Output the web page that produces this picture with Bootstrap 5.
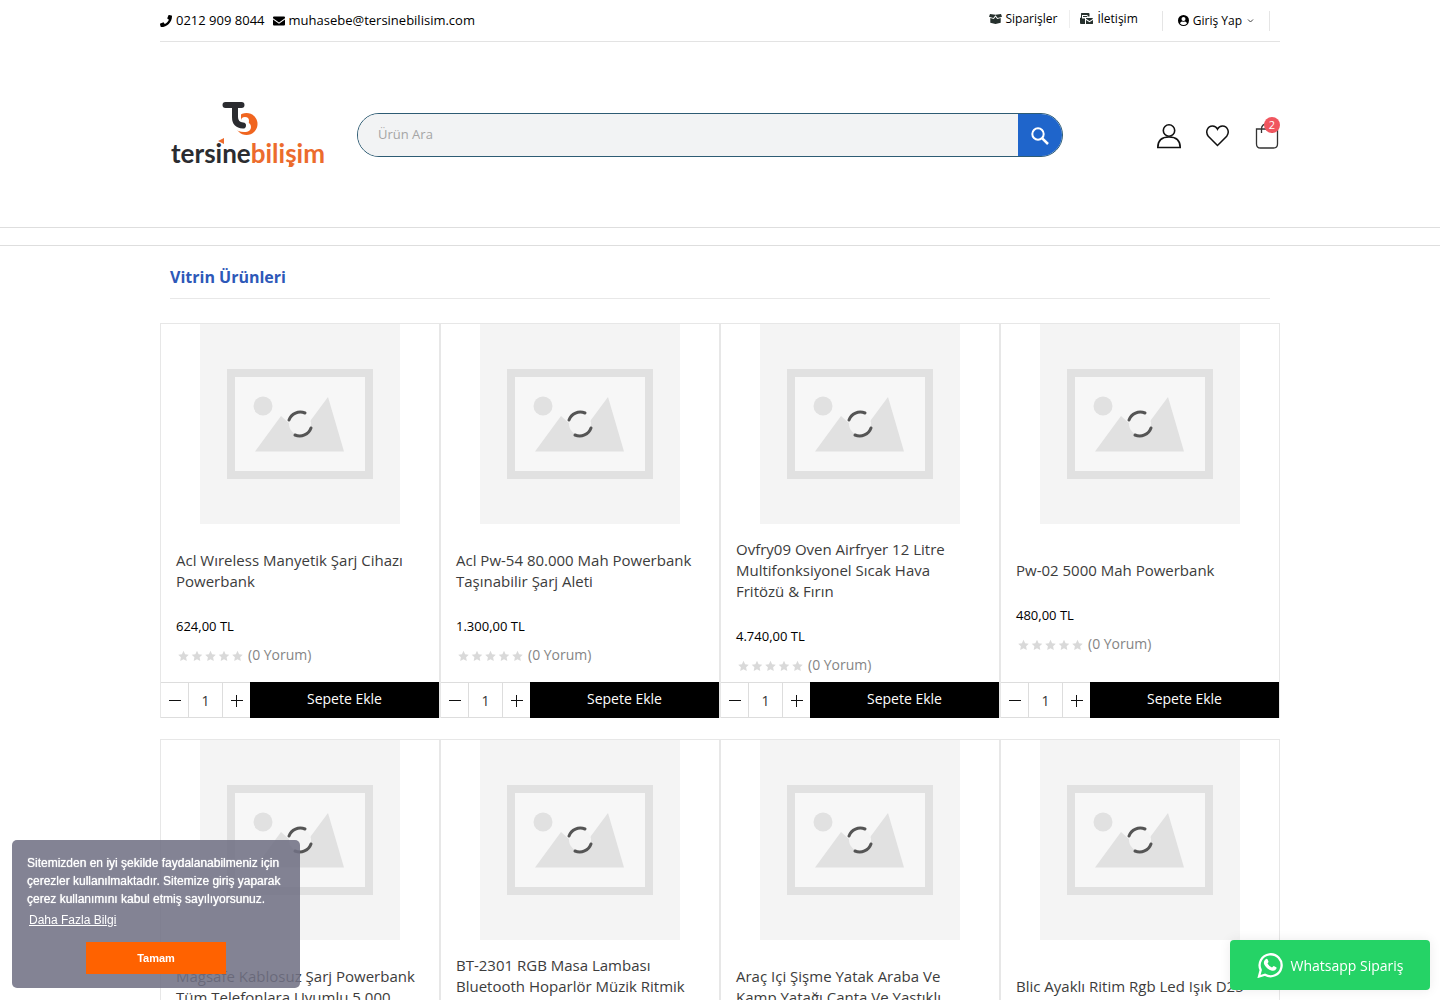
<!DOCTYPE html>
<html lang="tr">
<head>
<meta charset="utf-8">
<meta name="viewport" content="width=device-width, initial-scale=1">
<title>Tersine Bilişim</title>
<link href="https://cdn.jsdelivr.net/npm/bootstrap@5.3.0/dist/css/bootstrap.min.css" rel="stylesheet">
<style>
body{font-family:"Open Sans","Noto Sans",sans-serif;color:#000;background:#fff;font-size:14px}
a{color:inherit;text-decoration:none}
.shop-wrap{max-width:1120px;margin:0 auto}
.top-strip{height:42px;border-bottom:1px solid #e3e3e3;font-size:13px}
.top-strip .quick{font-size:12px;margin-right:10px}
.top-strip .quick-link{margin-bottom:4px}
.quick-first{padding-right:12px}
.split{border-left:1px solid #eee;padding-left:10px}
.login-box{border-left:1px solid #e5e5e5;border-right:1px solid #e5e5e5;padding:0 15px;height:20px}
.site-head{height:185px}
.brand-box{width:176px;padding:0 10px;margin-right:21px}
.brand-word{font:700 26px/32px Lato,sans-serif;color:#2b2c30}
.brand-word em{font-style:normal;color:#ec6b2d}
.brand-marks{left:0;bottom:0}
.search-box{width:706px;height:44px;border:1px solid #2e5c74;border-radius:22px;overflow:hidden;background:#f2f2f2}
.search-box input{background:#f2f3f4;border:0;padding:0 20px;font-size:13px;outline:0}
.search-box input::placeholder{color:#a5a5a5}
.search-box button{width:44px;border:0;background:#1f65cb}
.head-icons{padding-top:2px}
.count-dot{top:-6px;right:0;width:16px;height:16px;border-radius:50%;background:#f0565f;color:#fff;font-size:11px;line-height:16px}
.menu-strip{height:19px;border-top:1px solid #dedede;border-bottom:1px solid #dedede}
.sec-title{margin:0 10px 24px;padding:20px 0 10px;font-size:16px;line-height:22px;font-weight:700;color:#2d58b8;border-bottom:1px solid #e8e8e8}
.product{border:1px solid #e7e7e7;border-bottom:0;margin-bottom:21px}
.product .info{height:158px;padding:8px 15px 0}
.product h3{font-size:15px;line-height:21px;font-weight:400;color:#3c3c3c;margin:0 0 24px;padding-right:5px}
.price{font-size:13px;line-height:20px;font-weight:500;margin-bottom:9px}
.votes{font-size:14px;line-height:20px;color:#858585}
.buy{height:36px}
.buy button,.buy input{border:0;background:#fff;padding:0}
.qty-row{width:89px;border:1px solid #ddd;border-left:0;border-right:0}
.qty-row button{width:27px;line-height:1}
.qty-row input{width:35px;font-size:14px;text-align:center;border-left:1px solid #ddd;border-right:1px solid #ddd;color:#333}
.buy .add{background:#000;color:#fff;font-size:14px;padding-bottom:3px}
.cookie{left:12px;bottom:12px;width:288px;height:148px;padding:14px 15px;border-radius:5px;background:rgba(113,112,132,.87);color:#fff;font:12px/18px "Liberation Sans",Arial,sans-serif;z-index:5}
.cookie p{text-shadow:0 0 1px #fff}
.cookie a{text-decoration:underline;padding:0 2px;margin-top:3px}
.cookie button{width:140px;height:32px;border:0;background:#ff6200;color:#fff;font-weight:700;font-size:11px;margin-top:13px}
.wa{right:10px;bottom:10px;width:200px;height:50px;border-radius:4px;background:#25d366;color:#fff;font-size:14px;box-shadow:0 0 12px rgba(0,0,0,.08);z-index:5}
</style>
<script src="https://cdn.jsdelivr.net/npm/bootstrap@5.3.0/dist/js/bootstrap.bundle.min.js"></script>
</head>
<body>
<svg class="d-none" aria-hidden="true">
  <symbol id="ph" viewBox="0 0 200 200">
    <path fill="#f4f4f4" d="M0 0h200v200H0z"/>
    <path fill="#f7f7f7" stroke="#e1e1e1" stroke-width="8" d="M31 49h138v102H31z"/>
    <circle cx="63" cy="82" r="9.500" fill="#e1e1e1"/>
    <path fill="#e1e1e1" d="M55 127.500 81 92l18 16 9-8 20-27 16 54.500z"/>
    <circle cx="100" cy="100" r="11" fill="#f4f4f4"/>
    <path fill="none" stroke="#555" stroke-width="3" stroke-linecap="round" d="M89 96a12 12 0 0 1 16-7M111 104a12 12 0 0 1-16 7"/>
  </symbol>
  <symbol id="stars" viewBox="0 0 68 14">
    <g fill="#d9d9d9"><path id="st" d="m7.500 2.800 1.600 3.400 3.700.5-2.700 2.600.7 3.700-3.300-1.800L4.200 13l.7-3.700L2.200 6.700l3.700-.5z"/><use href="#st" x="13.500"/><use href="#st" x="27"/><use href="#st" x="40.500"/><use href="#st" x="54"/></g>
  </symbol>
  <symbol id="minus" viewBox="0 0 12 12"><path d="M0 5.500h12" stroke="#111"/></symbol>
  <symbol id="plus" viewBox="0 0 12 12"><path d="M0 5.500h12M5.500 0v12" stroke="#111"/></symbol>
</svg>

<header>
  <div class="shop-wrap">
    <div class="top-strip d-flex align-items-center justify-content-between">
      <div class="d-flex align-items-center gap-2">
        <a href="#" class="d-flex align-items-center gap-1"><svg width="12" height="12" viewBox="0 0 512 512"><path d="M493 25 389 1c-11-3-23 3-27 14l-48 112c-4 10-1 22 7 29l61 49c-36 77-99 141-178 178l-49-61c-7-8-19-11-29-7L14 363c-11 5-17 16-14 27l24 104c3 11 12 18 24 18 256 0 464-207 464-464 0-11-8-21-19-23z"/></svg>0212 909 8044</a>
        <a href="#" class="d-flex align-items-center gap-1"><svg width="12" height="12" viewBox="0 0 12 12"><path d="M0 2.500Q0 1.500 1 1.500h10q1 0 1 1v.8L6 7.600 0 3.300zM0 4.500l6 4.300 6-4.300v5q0 1-1 1H1q-1 0-1-1z"/></svg>muhasebe@tersinebilisim.com</a>
      </div>
      <div class="quick d-flex align-items-center">
        <a href="#" class="quick-link quick-first d-flex align-items-center gap-1"><svg width="13" height="12" viewBox="0 0 13 12"><path fill="#26302d" d="m1 1 5.500.8L12 1l1 2.800-4.300 1.300L6.500 2.300 4.300 5.100 0 3.800zM1.300 5l3.500 1 1.700-2.300L8.200 6l3.500-1v4.700L6.500 11 1.300 9.700z"/></svg>Siparişler</a>
        <a href="#" class="quick-link split d-flex align-items-center gap-1 pe-4"><svg width="13" height="12" viewBox="0 0 13 12"><path fill="#26302d" d="M1.500 0h7Q9.500 0 9.500 1v2.500h-2V2H2v3.500h3V11H1q-1 0-1-1V5l1-.5V1Q1 0 1.500 0zM6 5h6q1 0 1 .8L9.500 8 6 5.800zM6 7l3.500 2.200L13 7v3.500q0 .5-1 .5H6z"/><path fill="#26302d" d="M3 3h4v1H3zM1 7h4v1H1z"/></svg>İletişim</a>
        <a href="#" class="login-box d-flex align-items-center gap-1"><svg width="11" height="11" viewBox="0 0 11 11"><circle cx="5.500" cy="5.500" r="5.500"/><circle cx="5.500" cy="4" r="2" fill="#fff"/><path fill="#fff" d="M2 8.500q.5-2 2.200-2 1.300.6 2.600 0 1.700 0 2.200 2-3.500 3-7 0z"/></svg>Giriş Yap<svg width="8" height="6" viewBox="0 0 8 6" fill="none" stroke="#444"><path d="m2 1.500 2.500 2.500L7 1.500"/></svg></a>
      </div>
    </div>
    <div class="site-head d-flex align-items-center">
      <a href="#" class="brand-box position-relative d-flex flex-column align-items-center">
        <svg class="me-3" width="36" height="36" viewBox="0 0 36 36"><circle cx="24.500" cy="23" r="11" fill="#f0651f"/><path d="M14 8v9q0 9 8 9h2" fill="none" stroke="#fff" stroke-width="10" stroke-linecap="round"/><circle cx="23" cy="20" r="4" fill="#fff"/><path d="M3.500 4h16M13 5v11q0 8 8 8.500" fill="none" stroke="#2b2c30" stroke-width="6" stroke-linecap="round"/></svg>
        <span class="brand-word">tersine<em>bilişim</em></span>
        <svg class="brand-marks position-absolute" width="176" height="36" viewBox="0 0 176 36" aria-hidden="true"><path fill="#ec6b2d" d="m58 8 6-3v6zM129 28l6 3-6 3z"/></svg>
      </a>
      <form class="search-box d-flex">
        <input type="text" class="flex-grow-1" placeholder="Ürün Ara" aria-label="Ürün Ara">
        <button type="button" aria-label="Ara"><svg width="18" height="18" viewBox="0 0 18 18" fill="none" stroke="#fff" stroke-width="2"><circle cx="7" cy="7" r="5.700"/><path d="m11.300 11.300 5.700 5.700" stroke-width="2.500"/></svg></button>
      </form>
      <div class="head-icons d-flex align-items-center gap-4 ms-auto">
        <a href="#" aria-label="Hesabım"><svg width="25" height="26" viewBox="0 0 25 26" fill="none" stroke="#111" stroke-width="1.600"><circle cx="12" cy="7.500" r="5.700"/><path d="M.8 24.500q0-10.500 11.200-10.500t11.200 10.500z"/></svg></a>
        <a href="#" aria-label="Favoriler"><svg width="25" height="24" viewBox="0 0 25 24" fill="none" stroke="#111" stroke-width="1.500"><path d="M11.500 21.500 2.300 12.200C-1 8 1.500 2 6.500 2q3.500 0 5 3.200Q13 2 16.500 2c5 0 7.500 6 4.200 10.200z"/></svg></a>
        <a href="#" class="position-relative" aria-label="Sepet"><svg width="25" height="26" viewBox="0 0 25 26" fill="none" stroke="#333" stroke-width="1.300"><path d="M1.500 6h21v15q0 4-4 4h-13q-4 0-4-4zM6.500 10V6q0-5 5.500-5t5.500 5v4"/></svg><span class="count-dot position-absolute text-center">2</span></a>
      </div>
    </div>
  </div>
  <div class="menu-strip"></div>
</header>

<main class="shop-wrap">
  <h2 class="sec-title">Vitrin Ürünleri</h2>
  <div class="row row-cols-4 g-0">
    <div class="col"><article class="product">
      <svg class="d-block mx-auto" width="200" height="200"><use href="#ph"/></svg>
      <div class="info d-flex flex-column justify-content-center"><h3><a href="#">Acl Wıreless Manyetik Şarj Cihazı Powerbank</a></h3><div class="price">624,00 TL</div><div class="votes d-flex align-items-center gap-1"><svg width="68" height="14"><use href="#stars"/></svg>(0 Yorum)</div></div>
      <div class="buy d-flex"><div class="qty-row d-flex"><button type="button" aria-label="Azalt"><svg width="12" height="12"><use href="#minus"/></svg></button><input type="text" value="1" aria-label="Adet"><button type="button" aria-label="Artır"><svg width="12" height="12"><use href="#plus"/></svg></button></div><button type="button" class="add flex-grow-1">Sepete Ekle</button></div>
    </article></div>
    <div class="col"><article class="product">
      <svg class="d-block mx-auto" width="200" height="200"><use href="#ph"/></svg>
      <div class="info d-flex flex-column justify-content-center"><h3><a href="#">Acl Pw-54 80.000 Mah Powerbank Taşınabilir Şarj Aleti</a></h3><div class="price">1.300,00 TL</div><div class="votes d-flex align-items-center gap-1"><svg width="68" height="14"><use href="#stars"/></svg>(0 Yorum)</div></div>
      <div class="buy d-flex"><div class="qty-row d-flex"><button type="button" aria-label="Azalt"><svg width="12" height="12"><use href="#minus"/></svg></button><input type="text" value="1" aria-label="Adet"><button type="button" aria-label="Artır"><svg width="12" height="12"><use href="#plus"/></svg></button></div><button type="button" class="add flex-grow-1">Sepete Ekle</button></div>
    </article></div>
    <div class="col"><article class="product">
      <svg class="d-block mx-auto" width="200" height="200"><use href="#ph"/></svg>
      <div class="info d-flex flex-column justify-content-center"><h3><a href="#">Ovfry09 Oven Airfryer 12 Litre Multifonksiyonel Sıcak Hava Fritözü &amp; Fırın</a></h3><div class="price">4.740,00 TL</div><div class="votes d-flex align-items-center gap-1"><svg width="68" height="14"><use href="#stars"/></svg>(0 Yorum)</div></div>
      <div class="buy d-flex"><div class="qty-row d-flex"><button type="button" aria-label="Azalt"><svg width="12" height="12"><use href="#minus"/></svg></button><input type="text" value="1" aria-label="Adet"><button type="button" aria-label="Artır"><svg width="12" height="12"><use href="#plus"/></svg></button></div><button type="button" class="add flex-grow-1">Sepete Ekle</button></div>
    </article></div>
    <div class="col"><article class="product">
      <svg class="d-block mx-auto" width="200" height="200"><use href="#ph"/></svg>
      <div class="info d-flex flex-column justify-content-center"><h3><a href="#">Pw-02 5000 Mah Powerbank</a></h3><div class="price">480,00 TL</div><div class="votes d-flex align-items-center gap-1"><svg width="68" height="14"><use href="#stars"/></svg>(0 Yorum)</div></div>
      <div class="buy d-flex"><div class="qty-row d-flex"><button type="button" aria-label="Azalt"><svg width="12" height="12"><use href="#minus"/></svg></button><input type="text" value="1" aria-label="Adet"><button type="button" aria-label="Artır"><svg width="12" height="12"><use href="#plus"/></svg></button></div><button type="button" class="add flex-grow-1">Sepete Ekle</button></div>
    </article></div>
    <div class="col"><article class="product">
      <svg class="d-block mx-auto" width="200" height="200"><use href="#ph"/></svg>
      <div class="info d-flex flex-column justify-content-center"><h3><a href="#">Magsafe Kablosuz Şarj Powerbank Tüm Telefonlara Uyumlu 5.000</a></h3><div class="price">&nbsp;</div><div class="votes">&nbsp;</div></div>
    </article></div>
    <div class="col"><article class="product">
      <svg class="d-block mx-auto" width="200" height="200"><use href="#ph"/></svg>
      <div class="info d-flex flex-column justify-content-center"><h3><a href="#">BT-2301 RGB Masa Lambası Bluetooth Hoparlör Müzik Ritmik</a><br>&nbsp;</h3><div class="price">&nbsp;</div><div class="votes">&nbsp;</div></div>
    </article></div>
    <div class="col"><article class="product">
      <svg class="d-block mx-auto" width="200" height="200"><use href="#ph"/></svg>
      <div class="info d-flex flex-column justify-content-center"><h3><a href="#">Araç Içi Şişme Yatak Araba Ve Kamp Yatağı Çanta Ve Yastıklı</a></h3><div class="price">&nbsp;</div><div class="votes">&nbsp;</div></div>
    </article></div>
    <div class="col"><article class="product">
      <svg class="d-block mx-auto" width="200" height="200"><use href="#ph"/></svg>
      <div class="info d-flex flex-column justify-content-center"><h3><a href="#">Blic Ayaklı Ritim Rgb Led Işık D25</a></h3><div class="price">&nbsp;</div><div class="votes">&nbsp;</div></div>
    </article></div>
  </div>
</main>

<div class="cookie position-fixed">
  <p class="m-0">Sitemizden en iyi şekilde faydalanabilmeniz için çerezler kullanılmaktadır. Sitemize giriş yaparak çerez kullanımını kabul etmiş sayılıyorsunuz.</p>
  <a href="#" class="d-inline-block">Daha Fazla Bilgi</a>
  <button type="button" class="d-block mx-auto">Tamam</button>
</div>
<a href="#" class="wa position-fixed d-flex align-items-center justify-content-center gap-2">
  <svg width="26" height="26" viewBox="0 0 26 26"><path d="M2 24.500 3.700 18A11 11 0 1 1 8 22.700z" fill="none" stroke="#fff" stroke-width="2.300"/><path fill="#fff" d="M9 7q1-.6 1.500.3l1 2.300q.2.600-1 1.900 1.700 3 4.500 4 1.300-1.600 1.800-1.500l2.400 1.200q.7.400.2 1.600-1.400 2.600-4.400 1.900-5.700-1.500-8-6.600Q6.300 9 9 7z"/></svg>
  Whatsapp Sipariş
</a>
</body>
</html>
